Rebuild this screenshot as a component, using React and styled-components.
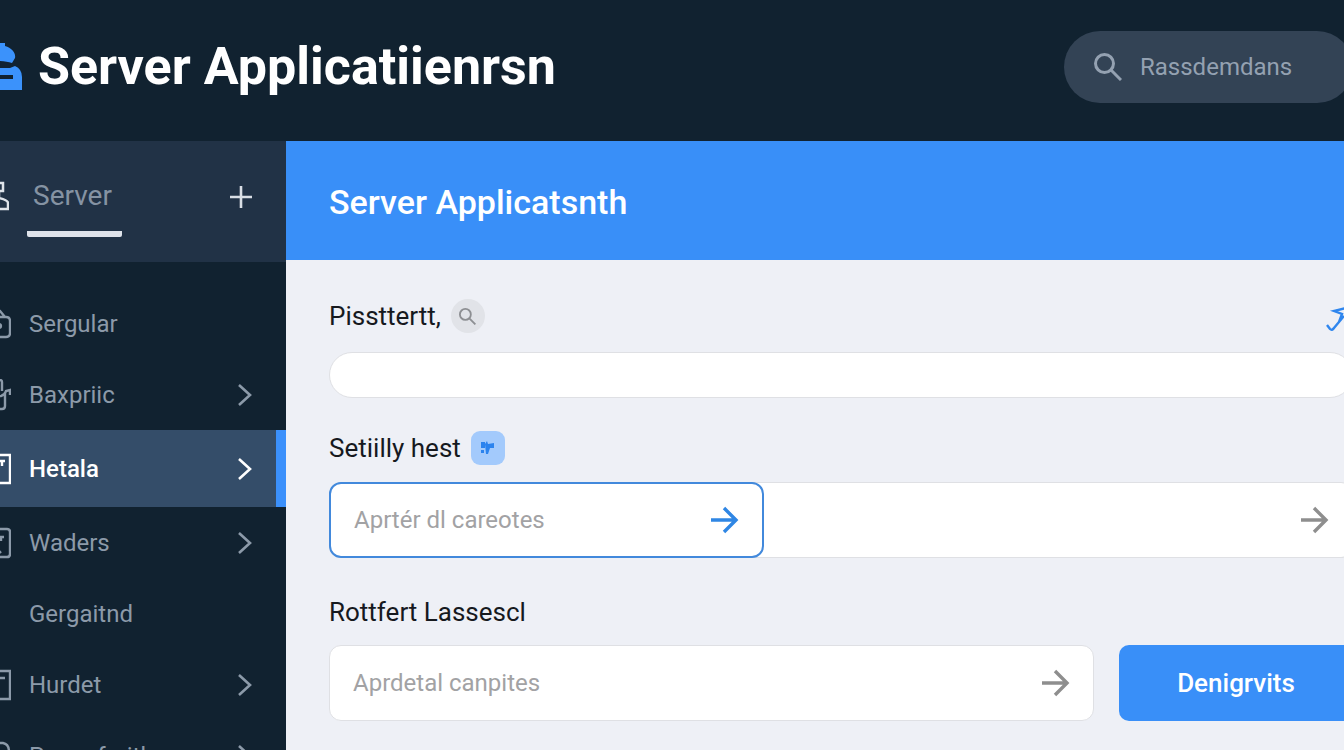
import React from "react";
import styled, { createGlobalStyle } from "styled-components";

const GlobalStyle = createGlobalStyle`
  * {
    box-sizing: border-box;
  }
  body {
    margin: 0;
    background: #eef0f6;
    font-family: Roboto, "Liberation Sans", sans-serif;
  }
  button, input {
    font: inherit;
    border: 0;
    padding: 0;
    background: none;
  }
  svg {
    flex: none;
    display: block;
  }
`;

const Window = styled.div`
  height: 100vh;
  overflow: hidden;
`;

// the shell bleeds past both sides of the window
const Page = styled.div`
  height: 100%;
  margin: 0 -9px 0 -24px;
  display: flex;
  flex-direction: column;
`;

const Header = styled.header`
  flex: none;
  height: 141px;
  padding-bottom: 8px;
  display: flex;
  align-items: center;
  background: #112230;
`;

const Title = styled.h1`
  margin: 0 auto 0 16px;
  font-size: 52px;
  line-height: 60px;
  font-weight: 700;
  color: #fff;
`;

const Search = styled.label`
  width: 289px;
  height: 72px;
  padding: 0 28px 0 30px;
  display: flex;
  align-items: center;
  gap: 18px;
  border-radius: 36px;
  background: #334355;
  color: #94a1b1;
`;

const SearchInput = styled.input`
  flex: 1;
  min-width: 0;
  font-size: 24px;
  color: inherit;
  outline: none;
  &::placeholder {
    color: inherit;
    opacity: 1;
  }
`;

const Columns = styled.div`
  flex: 1;
  min-height: 0;
  display: flex;
`;

const Sidebar = styled.aside`
  flex: 0 0 310px;
  background: #112230;
`;

const SideHead = styled.div`
  height: 121px;
  padding: 26px 34px 0 0;
  display: flex;
  align-items: flex-start;
  background: #213246;
  > svg {
    margin-top: 14px;
  }
`;

const Tab = styled.button`
  height: 70px;
  margin: 0 auto 0 18px;
  padding: 0 10px 6px 6px;
  border-bottom: 6px solid #dfe3ea;
  border-radius: 2px;
  font-size: 28px;
  line-height: 58px;
  color: #8593a3;
`;

const Add = styled.button`
  margin-top: 19px;
  color: #d9dee5;
`;

const Nav = styled.nav`
  padding-top: 26px;
`;

const NavItem = styled.a`
  height: ${(p) => (p.$active ? 77 : 71)}px;
  padding: 0 ${(p) => (p.$active ? 24 : 34)}px 0 7px;
  border-right: ${(p) => (p.$active ? "10px solid #3b90fb" : "0")};
  display: flex;
  align-items: center;
  gap: 18px;
  background: ${(p) => (p.$active ? "#344d69" : "none")};
  color: ${(p) => (p.$active ? "#fff" : "#8c9aa9")};
  font-size: 24px;
  font-weight: ${(p) => (p.$active ? 500 : 400)};
  text-decoration: none;
`;

const NavText = styled.span`
  flex: 1;
`;

const NavIcon = styled.svg`
  width: 28px;
  height: 32px;
  fill: none;
  stroke: currentColor;
  stroke-width: 2.4;
`;

const Main = styled.main`
  flex: 1;
  min-width: 0;
  background: #eef0f6;
`;

const Banner = styled.h2`
  margin: 0;
  height: 119px;
  padding: 0 43px;
  font-size: 34px;
  line-height: 122px;
  font-weight: 500;
  color: #fff;
  background: #398ff8;
`;

const Form = styled.form`
  padding: 38px 0 0 43px;
`;

const LabelRow = styled.div`
  height: 36px;
  display: flex;
  align-items: center;
  gap: 10px;
`;

const Label = styled.label`
  font-size: 26px;
  line-height: 36px;
  color: #16191e;
`;

const Round = styled.button`
  width: 34px;
  height: 34px;
  display: grid;
  place-items: center;
  border-radius: 50%;
  background: #e1e3e8;
  color: #8d8f93;
`;

const Edit = styled.button`
  margin-left: auto;
  color: #2f86ee;
`;

const PillInput = styled.input`
  display: block;
  width: 100%;
  height: 46px;
  margin: 18px 0 32px;
  padding: 0 24px;
  border: 1px solid #dfe0e4;
  border-radius: 23px;
  background: #fff;
  font-size: 24px;
`;

const Badge = styled.span`
  width: 34px;
  height: 34px;
  display: grid;
  place-items: center;
  border-radius: 9px;
  background: #a3cafc;
`;

const Group = styled.div`
  margin: 16px 0 36px;
  display: flex;
  border-radius: 12px;
  background: #fff;
  box-shadow: inset 0 0 0 1px #dfe0e4;
`;

const Field = styled.div`
  flex: ${(p) => (p.$focused ? "0 0 435px" : "1")};
  height: 76px;
  padding: 0 23px;
  display: flex;
  align-items: center;
  border: ${(p) => (p.$focused ? "2px solid #4289dc" : "1px solid #dfe0e4")};
  border-radius: 12px;
  background: #fff;
  color: ${(p) => (p.$focused ? "#2f86e4" : "#8e8e8e")};
`;

const FieldInput = styled.input`
  flex: 1;
  min-width: 0;
  font-size: 24px;
  color: #16191e;
  outline: none;
  &::placeholder {
    color: #a2a2a4;
    opacity: 1;
  }
`;

const Go = styled.button`
  margin-left: auto;
  padding-right: 24px;
  color: #8e8e8e;
`;

const Actions = styled.div`
  margin-top: 15px;
  display: flex;
  gap: 25px;
`;

const Submit = styled.button`
  flex: 0 0 234px;
  border-radius: 10px;
  background: #398ff8;
  color: #fff;
  font-size: 26px;
  font-weight: 500;
`;

const navItems = [
  { label: "Sergular", icon: "bag" },
  { label: "Baxpriic", icon: "tools", arrow: true },
  { label: "Hetala", icon: "panel", arrow: true, active: true },
  { label: "Waders", icon: "note", arrow: true },
  { label: "Gergaitnd" },
  { label: "Hurdet", icon: "box", arrow: true },
  { label: "Pconofaritho", icon: "round", arrow: true },
];

const shapes = {
  bag: (
    <>
      <path d="M3 9h20q4 0 4 4v12q0 4-4 4H7q-4 0-4-4V9M10 8l4-5h3l5 6" />
      <circle cx="16" cy="18" r="2" />
    </>
  ),
  tools: (
    <path d="M12 1h5q2 0 2 2v9M13 10v5q0 3 5 2 4-1 5-5l4-1v5M22 13v14q0 3-3 3h-5" />
  ),
  panel: <path d="M3 2h24v28H3zM12 8h10M19 9v4" />,
  note: <path d="M6 2h18q3 0 3 3v22q0 3-3 3H6M12 10h9M18 11v3M15 23l3 3" />,
  box: <path d="M5 2h22v28H5M12 9h10" />,
  round: <path d="M8 3h12q6 1 6 9v14q0 4-4 4H6" />,
};

const Chevron = () => (
  <svg width="16" height="24" viewBox="0 0 16 24" fill="none" stroke="currentColor" strokeWidth="2.6">
    <path d="M3 2l11 10L3 22" />
  </svg>
);

const Arrow = () => (
  <svg width="28" height="28" viewBox="0 0 28 28" fill="none" stroke="currentColor" strokeWidth="3.4">
    <path d="M0 14h25M13 2l12 12-12 12" />
  </svg>
);

const SearchIcon = ({ size }) => (
  <svg width={size} height={size} viewBox="0 0 28 28" fill="none" stroke="currentColor" strokeWidth="3">
    <circle cx="10.5" cy="10.5" r="9" />
    <path d="M17 17l10 10" />
  </svg>
);

const Logo = () => (
  <svg width="46" height="48" viewBox="0 0 46 48" fill="#3b92fb">
    <path d="M18 0h11v3c7 2 11 7 10 12l-3 5c-4-1-8-2-14-2-7 0-11 1-14 3-2-8 1-15 10-18z" />
    <path d="M0 34q3-7 12-9h22l5-2q7 3 7 11v13H0zM10 32v4h27v-4z" fillRule="evenodd" />
  </svg>
);

const App = () => {
  return (
    <Window>
      <GlobalStyle />
      <Page>
        <Header>
          <Logo />
          <Title>Server Applicatiienrsn</Title>
          <Search>
            <SearchIcon size={28} />
            <SearchInput type="search" aria-label="Search" placeholder="Rassdemdans" />
          </Search>
        </Header>
        <Columns>
          <Sidebar>
            <SideHead>
              <svg width="33" height="30" viewBox="0 0 33 30" fill="none" stroke="#dfe4ea" strokeWidth="2.5">
                <path d="M19 2h8v8h-4v7q9 2 9 5v6H11" />
              </svg>
              <Tab type="button">Server</Tab>
              <Add type="button" aria-label="Add">
                <svg width="22" height="22" viewBox="0 0 22 22" stroke="currentColor" strokeWidth="2.6">
                  <path d="M0 11h22M11 0v22" />
                </svg>
              </Add>
            </SideHead>
            <Nav>
              {navItems.map(({ label, icon, arrow, active }) => (
                <NavItem key={label} href="#" $active={active}>
                  <NavIcon viewBox="0 0 28 32">{shapes[icon]}</NavIcon>
                  <NavText>{label}</NavText>
                  {arrow && <Chevron />}
                </NavItem>
              ))}
            </Nav>
          </Sidebar>
          <Main>
            <Banner>Server Applicatsnth</Banner>
            <Form onSubmit={(e) => e.preventDefault()}>
              <LabelRow>
                <Label htmlFor="name">Pissttertt,</Label>
                <Round type="button" aria-label="Find">
                  <SearchIcon size={17} />
                </Round>
                <Edit type="button" aria-label="Edit">
                  <svg width="28" height="32" viewBox="0 0 28 32" fill="none" stroke="currentColor" strokeWidth="2.4">
                    <path d="M2 25l3 4q2 2 4-1L19 16M21 8L9 11l8 3-3 8" />
                  </svg>
                </Edit>
              </LabelRow>
              <PillInput id="name" />
              <LabelRow>
                <Label htmlFor="host">Setiilly hest</Label>
                <Badge>
                  <svg width="16" height="16" viewBox="0 0 16 16" fill="#2b83ee">
                    <path d="M1 2h4v6H1zM1 10h3v3H1zM5 4l2-3 1 3 6-1v5h-4l-2 6H6z" />
                  </svg>
                </Badge>
              </LabelRow>
              <Group>
                <Field $focused>
                  <FieldInput id="host" placeholder="Aprtér dl careotes" />
                  <Arrow />
                </Field>
                <Go type="button" aria-label="Next">
                  <Arrow />
                </Go>
              </Group>
              <LabelRow>
                <Label htmlFor="asset">Rottfert Lassescl</Label>
              </LabelRow>
              <Actions>
                <Field>
                  <FieldInput id="asset" placeholder="Aprdetal canpites" />
                  <Arrow />
                </Field>
                <Submit type="submit">Denigrvits</Submit>
              </Actions>
            </Form>
          </Main>
        </Columns>
      </Page>
    </Window>
  );
};

export default App;
